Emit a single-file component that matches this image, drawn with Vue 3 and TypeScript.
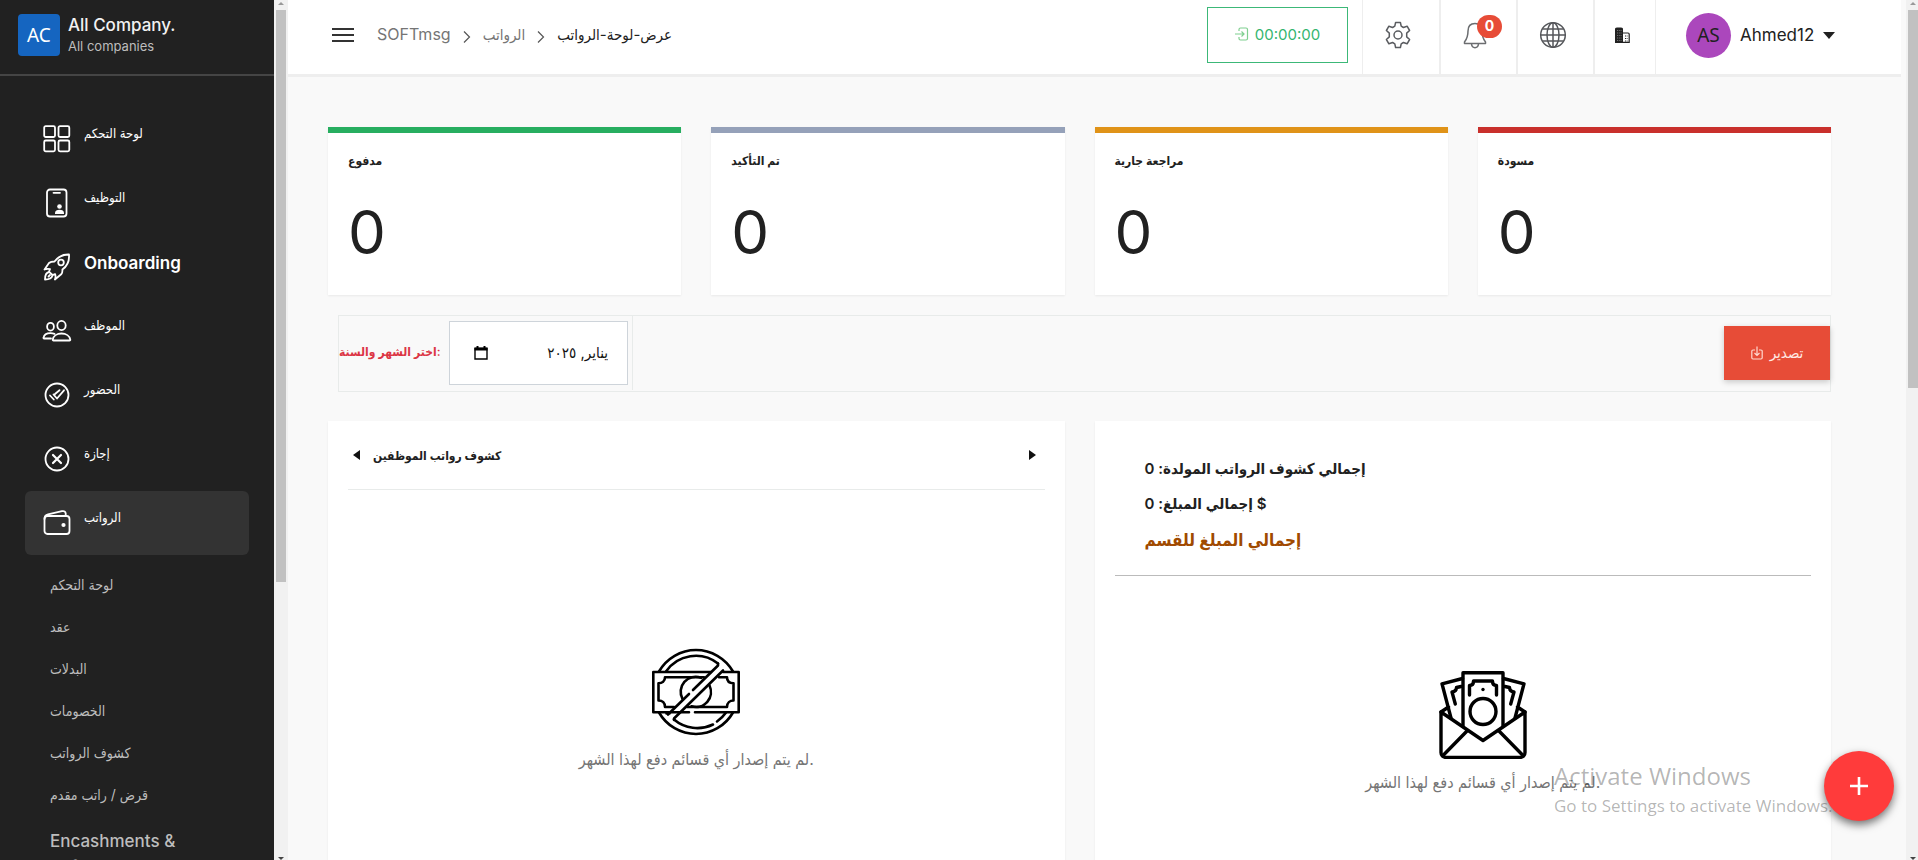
<script setup lang="ts">
import { ref } from 'vue'

interface NavItem { label: string; icon: string; latin?: boolean; active?: boolean }
interface StatCard { label: string; value: number; tone: string }

const nav: NavItem[] = [
  { label: 'لوحة التحكم', icon: 'grid' },
  { label: 'التوظيف', icon: 'badge' },
  { label: 'Onboarding', icon: 'rocket', latin: true },
  { label: 'الموظف', icon: 'people' },
  { label: 'الحضور', icon: 'check' },
  { label: 'إجازة', icon: 'cross' },
  { label: 'الرواتب', icon: 'wallet', active: true },
]

const subNav: string[] = [
  'لوحة التحكم', 'عقد', 'البدلات', 'الخصومات', 'كشوف الرواتب', 'قرض / راتب مقدم',
]

const stats: StatCard[] = [
  { label: 'مدفوع', value: 0, tone: 'green' },
  { label: 'تم التأكيد', value: 0, tone: 'slate' },
  { label: 'مراجعة جارية', value: 0, tone: 'amber' },
  { label: 'مسودة', value: 0, tone: 'red' },
]

const month = ref('يناير, ٢٠٢٥')
</script>

<template>
  <div class="shell">
    <aside class="sidebar">
      <div class="company">
        <span class="company-logo">AC</span>
        <div>
          <div class="company-name">All Company.</div>
          <div class="company-sub">All companies</div>
        </div>
      </div>
      <nav class="nav">
        <a v-for="item in nav" :key="item.icon" href="#" class="nav-item" :class="{ active: item.active }">
          <svg class="nav-icon" viewBox="0 0 30 30" fill="none" stroke="#fff" stroke-width="1.8" stroke-linejoin="round" stroke-linecap="round">
            <g v-if="item.icon === 'grid'">
              <rect x="2.2" y="2.2" width="10.8" height="10.8" rx="1.5" /><rect x="16.5" y="2.2" width="10.8" height="10.8" rx="1.5" />
              <rect x="2.2" y="16.5" width="10.8" height="10.8" rx="1.5" /><rect x="16.5" y="16.5" width="10.8" height="10.8" rx="1.5" />
            </g>
            <g v-else-if="item.icon === 'badge'">
              <rect x="5" y="1.5" width="19.5" height="27" rx="3" /><path d="M11.500 4.800h6.500" />
              <circle cx="17.500" cy="18.500" r="2.300" fill="#fff" stroke="none" /><path d="M13 26v-1c0-2 2-3.200 4.500-3.200s4.500 1.200 4.500 3.200v1z" fill="#fff" stroke="none" />
            </g>
            <g v-else-if="item.icon === 'rocket'">
              <path d="M27 2.500c-6-.2-10.500 1.500-14.500 7-1.500 0-4 .2-5.500 1.500L2.500 17.500c2-.8 4-.8 5.500-.3-.5 1-.8 2-.8 2.600l3.300 3.200c.8 0 1.800-.4 2.600-.9.600 1.600.7 3.400-.2 5.400l6.300-5.200c1.100-1.200 1.300-3.500 1.200-4.800C26 13.500 27.500 8.500 27 2.500z" />
              <circle cx="19" cy="10.500" r="2.800" /><path d="M7 20c-2.500.5-4 2.500-4 7.500 4.500 0 6.800-1.500 7.500-4" /><path d="M6.500 24.500l1.500-1.500" />
            </g>
            <g v-else-if="item.icon === 'people'">
              <ellipse cx="19.500" cy="9.500" rx="4.200" ry="4.600" /><path d="M11.500 24.500h16c.6 0 .9-.4.8-.9-.6-3.800-4.400-6.100-8.800-6.100s-8.200 2.300-8.800 6.100c-.1.500.2.900.8.900z" />
              <ellipse cx="8.500" cy="10.700" rx="3.400" ry="3.900" /><path d="M9 22.500H2c-.4 0-.6-.3-.5-.7.500-3 3.600-4.700 7-4.700 1.400 0 2.800.3 4 .8" />
            </g>
            <g v-else-if="item.icon === 'check'">
              <circle cx="15" cy="15" r="11.500" /><path d="M8 15.500l3.800 4M11.500 14.500l3.500 4 7-8.200M13 14l4.500-3.800" />
            </g>
            <g v-else-if="item.icon === 'cross'">
              <circle cx="15" cy="15" r="11.500" /><path d="M11 11l8 8M19 11l-8 8" stroke-width="2.200" />
            </g>
            <g v-else>
              <rect x="2.500" y="8" width="25" height="18" rx="3" /><path d="M2.500 11c0-3 .8-4 3.500-4.600l14-3.200c2.200-.5 3.500.4 3.700 2.200v2.400" />
              <circle cx="21.500" cy="17" r="2.100" fill="#fff" stroke="none" />
            </g>
          </svg>
          <span class="nav-label" :class="{ latin: item.latin }">{{ item.label }}</span>
        </a>
      </nav>
      <div class="subnav">
        <a v-for="(label, i) in subNav" :key="i" href="#" class="sub-item">{{ label }}</a>
        <a href="#" class="sub-item latin">Encashments &amp; Refunds</a>
      </div>
    </aside>

    <div class="scroll side-scroll">
      <span class="arrow up"></span>
      <div class="thumb side-thumb"></div>
      <span class="arrow down"></span>
    </div>

    <div class="main">
      <header class="topbar">
        <button class="burger" aria-label="Menu"><i></i><i></i><i></i></button>
        <div class="crumbs">
          <a href="#" class="crumb brand">SOFTmsg</a>
          <svg class="chev" viewBox="0 0 8 12"><path d="M1 0.500L6.500 6 1 11.500" fill="none" stroke="#555" stroke-width="1.200" /></svg>
          <a href="#" class="crumb">الرواتب</a>
          <svg class="chev" viewBox="0 0 8 12"><path d="M1 0.500L6.500 6 1 11.500" fill="none" stroke="#555" stroke-width="1.200" /></svg>
          <span class="crumb current">عرض-لوحة-الرواتب</span>
        </div>
        <button class="timer">
          <svg width="14" height="14" viewBox="0 0 14 14" fill="none" stroke="#7fcf8f" stroke-width="1.200"><path d="M4 4V2.500C4 1.500 4.500 1 5.500 1h5.500c1 0 1.500.5 1.500 1.500v9c0 1-.5 1.500-1.500 1.500H5.500C4.500 13 4 12.500 4 11.500V10M0 7h9M6.500 4.500L9 7 6.500 9.500" /></svg>
          <span>00:00:00</span>
        </button>
        <div class="tools">
          <button class="tool first" aria-label="Settings">
            <svg width="28" height="28" viewBox="0 0 28 28" fill="none" stroke="#5a5c60" stroke-width="1.500" stroke-linejoin="round">
              <path d="M11.600 1.500h4.800l.8 3.700 2.200 1.300 3.700-1.300 2.500 4.300-2.900 2.600v3.800l2.900 2.600-2.500 4.300-3.700-1.300-2.200 1.300-.8 3.700h-4.800l-.8-3.700-2.200-1.300-3.700 1.300-2.500-4.300 2.900-2.600v-3.800L2.400 9.500l2.500-4.300 3.700 1.300 2.200-1.300z" /><circle cx="14" cy="14" r="4" />
            </svg>
          </button>
          <button class="tool bell" aria-label="Notifications">
            <svg width="24" height="28" viewBox="0 0 24 28" fill="none" stroke="#6b6d70" stroke-width="1.500" stroke-linejoin="round">
              <path d="M12 2.500c-4.500 0-7 3-7 7.500 0 6-1.500 8.500-3.500 11v1.500h21V21c-2-2.500-3.500-5-3.500-11 0-4.500-2.500-7.500-7-7.500zM8.500 23c.3 2.300 1.700 3.700 3.500 3.700s3.200-1.400 3.500-3.700" />
            </svg>
            <span class="count">0</span>
          </button>
          <button class="tool" aria-label="Language">
            <svg width="28" height="28" viewBox="0 0 28 28" fill="none" stroke="#55575b" stroke-width="1.500">
              <circle cx="14" cy="14" r="12.300" /><ellipse cx="14" cy="14" rx="6" ry="12.300" /><path d="M14 1.700v24.600M1.700 14h24.600M3.500 8h21M3.500 20h21" />
            </svg>
          </button>
          <button class="tool narrow" aria-label="Company">
            <svg width="16" height="16" viewBox="0 0 16 16" fill="#222">
              <path d="M1 1.500C1 1 2 .5 5 .500s4 .5 4 1V16H1z" /><path d="M9 6h5c.8 0 1.200.4 1.200 1.200v8.100H9" fill="none" stroke="#222" stroke-width="1.200" />
              <path d="M3 3.500h4.500M3 6h4.500M3 8.500h4.500M3 11h4.500M3 13.500h4.500" stroke="#888" stroke-width=".8" stroke-dasharray="1 .800" /><path d="M11 9h2.500M11 11.500h2.500M11 14h2.500" stroke="#222" stroke-width="1.200" stroke-dasharray="1 .700" />
            </svg>
          </button>
          <button class="profile">
            <span class="avatar">AS</span>
            <span>Ahmed12</span>
            <span class="caret"></span>
          </button>
        </div>
      </header>

      <main class="content">
        <section class="stats">
          <article v-for="s in stats" :key="s.tone" class="stat" :class="s.tone">
            <h2>{{ s.label }}</h2>
            <p>{{ s.value }}</p>
          </article>
        </section>

        <section class="filter">
          <div class="picker">
            <label for="month">اختر الشهر والسنة:</label>
            <div class="month-box">
              <button class="cal" aria-label="Calendar">
                <svg width="14" height="14" viewBox="0 0 14 14"><path d="M1 2.500h12v10.500H1z" fill="none" stroke="#000" stroke-width="1.400" /><path d="M0.500 1.500h13v3H.500zM2.500 0h2v2h-2zM9.500 0h2v2h-2z" /></svg>
              </button>
              <input id="month" v-model="month" type="text" dir="rtl" />
            </div>
          </div>
          <button class="export">
            <svg width="12" height="14" viewBox="0 0 12 14" fill="none" stroke="#ffd9d0" stroke-width="1.200"><path d="M4 4H2C1.200 4 .800 4.400.800 5.200v6.600c0 .8.400 1.200 1.200 1.200h8c.8 0 1.200-.4 1.200-1.200V5.200c0-.8-.4-1.200-1.200-1.200H8M6 .5V9.500M3.500 7L6 9.500 8.500 7" /></svg>
            <span>تصدير</span>
          </button>
        </section>

        <section class="panels">
          <article class="panel">
            <div class="panel-head">
              <button class="tri left" aria-label="Previous"></button>
              <h3>كشوف رواتب الموظفين</h3>
              <button class="tri right" aria-label="Next"></button>
            </div>
            <div class="empty">
              <svg width="88" height="88" viewBox="0 0 88 88" fill="none" stroke="#000" stroke-width="2.600" stroke-linecap="round" stroke-linejoin="round">
                <path d="M7 23.500A42.600 42.600 0 0 1 81 23.500M7 64.500A42.600 42.600 0 0 0 81 64.500" />
                <path d="M14 23.500A36 36 0 0 1 66 15.500M22 71.500A36 36 0 0 0 61 76.500M65 73.500A36 36 0 0 0 74 64.500" />
                <path d="M59 24H1.300v40.300H37M43 64.300h43.700V24H71" />
                <path d="M52 29.300H13c0 4-3 6-6.500 6v17.200c4 0 6.500 2.500 6.500 6.500h9M35 59h40c0-4 3-6.500 6.500-6.500V35.300c-4 0-6.500-2-6.500-6h-8" />
                <path d="M49 29.800A15 15 0 0 0 30.500 51M39.500 58.300A15 15 0 0 0 57.500 37.500" />
                <path d="M66 15.500v2L41 42M37 46L16 66.500M71 22.500L22 70.500v1.500M14.500 65.500h3" />
              </svg>
              <p>لم يتم إصدار أي قسائم دفع لهذا الشهر.</p>
            </div>
          </article>

          <article class="panel">
            <div class="totals">
              <p class="total">إجمالي كشوف الرواتب المولدة: 0</p>
              <p class="total">إجمالي المبلغ: 0 $</p>
              <p class="dept">إجمالي المبلغ للقسم</p>
            </div>
            <div class="empty shifted">
              <svg width="88" height="88" viewBox="0 0 88 88" fill="none" stroke="#000" stroke-width="3.400" stroke-linecap="round" stroke-linejoin="round">
                <path d="M2 41v40.500c0 3 2 4.900 5 4.900h74c3 0 5-1.900 5-4.900V41L44 69.500z" /><path d="M28 60L4 84.500M60 60l24 24.500" />
                <path d="M24 55.500V1.800h40v53.700" /><path d="M23.500 7.500L3 12.800 12 47M64.500 7.500L85 12.800 76 47M2 41l7.500-5M86 41l-7.500-5" />
                <circle cx="44" cy="40.500" r="13" /><path d="M30.500 24V14.500c2.500 0 4-1.500 4-4.500h19c0 3 1.500 4.500 4 4.500V24" />
                <path d="M22 15.500l-4.500 1c0 2.500-1.500 4-4.500 4.500l3.300 12M66 15.500l4.500 1c0 2.500 1.500 4 4.500 4.500l-3.300 12" /><circle cx="44" cy="18.500" r="1.700" fill="#000" stroke="none" />
              </svg>
              <p>لم يتم إصدار أي قسائم دفع لهذا الشهر.</p>
            </div>
          </article>
        </section>
      </main>
    </div>

    <div class="scroll page-scroll">
      <span class="arrow up"></span>
      <div class="thumb page-thumb"></div>
      <span class="arrow down"></span>
    </div>

    <div class="watermark">
      <div class="wm-title">Activate Windows</div>
      <div class="wm-text">Go to Settings to activate Windows.</div>
    </div>
    <button class="fab" aria-label="Add">
      <svg width="18" height="18" viewBox="0 0 18 18"><path d="M9 0v18M0 9h18" stroke="#fff" stroke-width="2.600" /></svg>
    </button>
  </div>
</template>

<style>
body { margin: 0; overflow: hidden; }
</style>

<style scoped>
* { box-sizing: border-box; }
h2, h3, p { margin: 0; }
a { text-decoration: none; color: inherit; }
button { border: 0; background: none; padding: 0; margin: 0; font: inherit; color: inherit; }

.shell {
  position: relative;
  display: flex;
  height: 100vh;
  overflow: hidden;
  background: #f9f9f9;
  color: #212121;
  font-family: Inter, 'DejaVu Sans Condensed', 'DejaVu Sans', sans-serif;
  font-size: 16px;
}

.sidebar { flex: 0 0 274px; background: #212121; color: #fff; overflow: hidden; }
.company { display: flex; gap: 8px; height: 76px; padding: 14px 18px; border-bottom: 2px solid #454545; }
.company-logo {
  width: 42px; height: 42px; border-radius: 4px; background: #1565c0;
  display: flex; align-items: center; justify-content: center;
  font-family: 'Noto Sans', sans-serif; font-size: 19px;
}
.company-name { font-size: 17px; line-height: 22px; font-weight: 500; color: #f2f2f2; }
.company-sub { font-size: 13px; line-height: 20px; color: #bdbdbd; }
.nav { padding: 31px 25px 0; }
.nav-item { display: flex; align-items: center; gap: 12px; height: 64px; padding-left: 17px; border-radius: 6px; }
.nav-item.active { background: #333; }
.nav-icon { width: 30px; height: 30px; }
.nav-label { font-size: 13px; line-height: 20px; padding-bottom: 12px; }
.nav-label.latin { font-size: 17px; font-weight: 600; padding-bottom: 8px; }
.subnav { padding: 9px 60px 0 50px; }
.sub-item { display: block; line-height: 42px; font-size: 14px; color: #bdbdbd; white-space: nowrap; }
.sub-item.latin { line-height: 26px; padding-top: 12px; font-size: 17px; font-weight: 500; white-space: normal; }

.scroll { display: flex; flex-direction: column; align-items: center; background: #f1f1f1; padding: 2px 0 0; }
.side-scroll { flex: 0 0 14px; }
.page-scroll { flex: 0 0 12px; padding-left: 2px; }
.thumb { width: 10px; background: #c1c1c1; margin-top: 5px; }
.side-thumb { flex: 0 0 calc(100% * 2 / 3); }
.page-thumb { flex: 0 0 44%; }
.arrow { border: 3px solid transparent; border-top-width: 0; border-bottom-width: 3px; }
.arrow.up { border-bottom-color: #999; }
.arrow.down { margin-top: auto; border-bottom-width: 0; border-top: 3px solid #444; }

.main { flex: 1; min-width: 0; }
.topbar { display: flex; align-items: stretch; height: 77px; margin-right: 5px; padding-left: 44px; background: #fff; border-bottom: 3px solid #eee; }
.burger { width: 22px; display: flex; flex-direction: column; justify-content: center; gap: 4px; padding-bottom: 4px; }
.burger i { display: block; width: 22px; height: 2px; background: #333; }
.crumbs { display: flex; align-items: center; gap: 12px; margin-left: 23px; padding-bottom: 6px; }
.crumb { font-size: 15px; color: #757575; }
.crumb.brand { font-size: 16px; }
.crumb.current { color: #212121; }
.chev { width: 8px; height: 12px; margin-top: 6px; }
.timer {
  display: flex; align-items: center; justify-content: center; gap: 6px;
  width: 141px; height: 56px; margin: 7px 14px 0 auto; padding-bottom: 2px; border: 1px solid #3cb878; color: #34b56f; font-size: 15px;
}
.tools { display: flex; }
.tool { position: relative; width: 77px; padding: 0 6px 4px 0; border-left: 2px solid #eee; display: flex; align-items: center; justify-content: center; }
.tool.first { border-left-width: 1px; }
.tool.bell { padding-right: 8px; }
.tool.narrow { width: 62px; padding-right: 6px; }
.count {
  position: absolute; left: 36px; top: 15px; width: 25px; height: 23px; border-radius: 12px;
  background: #e74c37; color: #fff; font-size: 14px; font-weight: 700; line-height: 22px; text-align: center;
}
.profile { display: flex; align-items: center; gap: 9px; width: 246px; padding: 0 0 4px 30px; border-left: 1px solid #eee; font-size: 17px; }
.avatar { width: 45px; height: 45px; border-radius: 50%; background: #ab47bc; display: flex; align-items: center; justify-content: center; font-family: 'Noto Sans', sans-serif; font-size: 19px; }
.caret { border: 6px solid transparent; border-top: 7px solid #212121; border-bottom: 0; }

.content { padding: 50px 75px 0 40px; }
.stats { display: grid; grid-template-columns: repeat(4, 1fr); gap: 30px; }
.stat { height: 168px; padding: 16px 20px; background: #fff; border-top: 6px solid; box-shadow: 0 1px 2px #0001; }
.stat h2 { font-size: 12px; line-height: 24px; color: #212121; }
.stat p { font-size: 60px; line-height: 72px; margin-top: 23px; color: #212121; }
.green { border-color: #27ae60; }
.slate { border-color: #95a1b9; }
.amber { border-color: #e09318; }
.red { border-color: #c9302c; }

.filter { display: flex; align-items: center; justify-content: space-between; height: 77px; margin: 20px 0 0 10px; padding-bottom: 2px; border: 1px solid #e8ebea; }
.picker { display: flex; align-items: center; justify-content: space-between; width: 294px; height: 75px; padding-right: 4px; border-right: 1px solid #e8ebea; }
.picker label { color: #dc3545; font-size: 12px; font-weight: 600; white-space: nowrap; padding-bottom: 2px; }
.month-box { display: flex; align-items: center; width: 179px; height: 64px; padding: 0 19px 0 24px; background: #fff; border: 1px solid #ced4da; }
.cal { width: 14px; height: 14px; display: flex; }
.month-box input { flex: 1; min-width: 0; border: 0; outline: 0; padding: 0; background: none; color: #111; font: inherit; font-size: 15px; }
.export { display: flex; align-items: center; justify-content: center; gap: 7px; width: 106px; height: 54px; background: #e74c37; color: #ffe9e4; font-size: 15px; box-shadow: 0 2px 6px #0003; }

.panels { display: grid; grid-template-columns: 1fr 1fr; gap: 30px; margin-top: 29px; }
.panel { height: 520px; padding: 0 20px; background: #fff; box-shadow: 0 1px 2px #0001; }
.panel-head { display: flex; align-items: center; height: 69px; padding: 0 9px 0 4px; border-bottom: 1px solid #e8ebea; }
.panel-head h3 { flex: 1; margin-left: 13px; padding-top: 2px; font-size: 12px; line-height: 20px; }
.tri { border: 5px solid transparent; }
.tri.left { border-left: 0; border-right: 7px solid #111; margin-left: 1px; }
.tri.right { border-right: 0; border-left: 7px solid #111; }
.empty { display: flex; flex-direction: column; align-items: center; gap: 9px; padding-top: 158px; }
.empty svg { display: block; }
.empty p { font-size: 16px; line-height: 28px; color: #757575; white-space: nowrap; }
.empty.shifted { padding: 95px 0 0 40px; }
.totals { height: 155px; padding: 30px 30px 0; border-bottom: 1px solid #bbb; }
.total { font-size: 15px; line-height: 35px; font-weight: 600; }
.dept { font-size: 17px; line-height: 38px; font-weight: 600; color: #a04a00; }

.fab {
  position: absolute; right: 24px; bottom: 39px; width: 70px; height: 70px; border-radius: 50%;
  display: flex; align-items: center; justify-content: center; background: #ff3b3b; box-shadow: 0 4px 8px #0008;
}
.watermark { position: absolute; right: 80px; bottom: 40px; width: 284px; color: #0000004d; font-family: 'Open Sans', 'Noto Sans', sans-serif; white-space: nowrap; pointer-events: none; }
.wm-title { font-size: 24px; line-height: 32px; }
.wm-text { font-size: 17px; line-height: 28px; }
</style>
